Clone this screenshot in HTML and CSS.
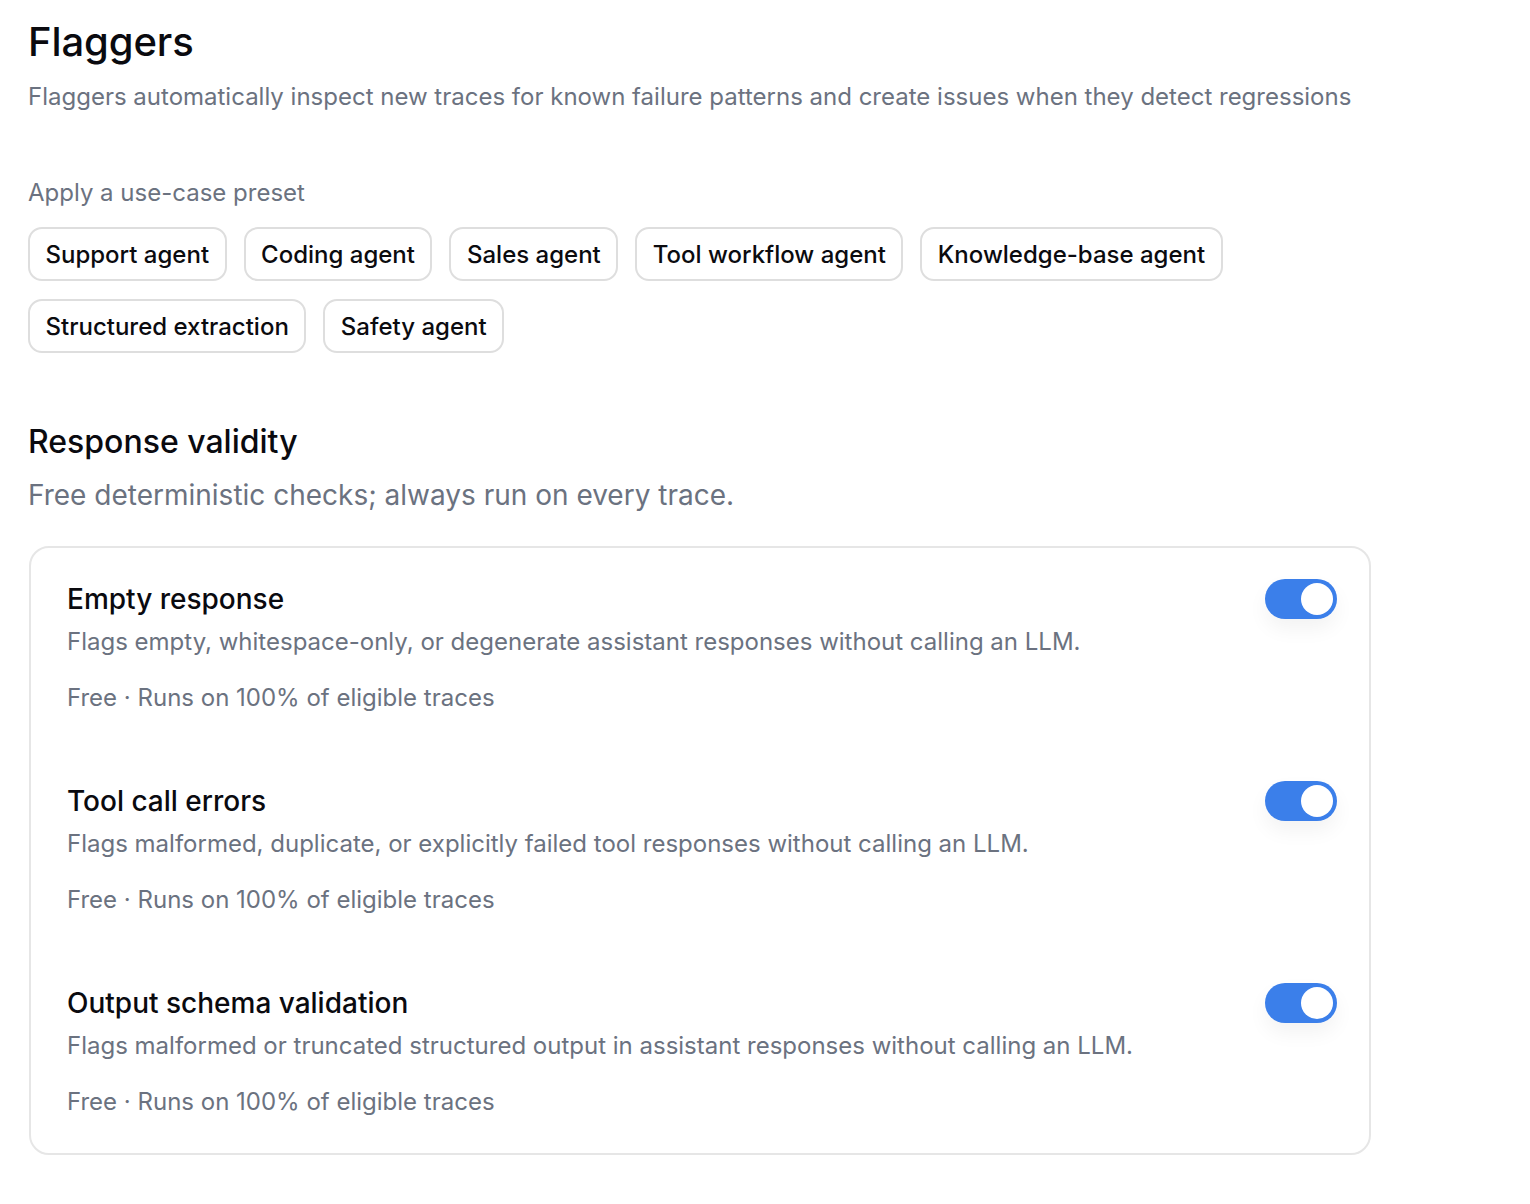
FILE: index.html
```html
<!DOCTYPE html>
<html>
<head>
<meta charset="utf-8">
<link rel="stylesheet" href="styles.css">
</head>
<body>
<main class="page">
  <header class="head">
    <h1 class="title">Flaggers</h1>
    <p class="subtitle">Flaggers automatically inspect new traces for known failure patterns and create issues when they detect regressions</p>
  </header>

  <section class="presets">
    <div class="presets-label">Apply a use-case preset</div>
    <div class="chips">
      <button class="chip">Support agent</button>
      <button class="chip">Coding agent</button>
      <button class="chip">Sales agent</button>
      <button class="chip">Tool workflow agent</button>
      <button class="chip">Knowledge-base agent</button>
      <button class="chip">Structured extraction</button>
      <button class="chip">Safety agent</button>
    </div>
  </section>

  <section class="group">
    <h2 class="group-title">Response validity</h2>
    <p class="group-desc">Free deterministic checks; always run on every trace.</p>
    <div class="card">
      <div class="item">
        <div class="item-text">
          <div class="item-title">Empty response</div>
          <div class="item-desc">Flags empty, whitespace-only, or degenerate assistant responses without calling an LLM.</div>
          <div class="item-meta">Free · Runs on 100% of eligible traces</div>
        </div>
        <span class="toggle on"><span class="knob"></span></span>
      </div>
      <div class="item">
        <div class="item-text">
          <div class="item-title">Tool call errors</div>
          <div class="item-desc">Flags malformed, duplicate, or explicitly failed tool responses without calling an LLM.</div>
          <div class="item-meta">Free · Runs on 100% of eligible traces</div>
        </div>
        <span class="toggle on"><span class="knob"></span></span>
      </div>
      <div class="item">
        <div class="item-text">
          <div class="item-title">Output schema validation</div>
          <div class="item-desc">Flags malformed or truncated structured output in assistant responses without calling an LLM.</div>
          <div class="item-meta">Free · Runs on 100% of eligible traces</div>
        </div>
        <span class="toggle on"><span class="knob"></span></span>
      </div>
    </div>
  </section>
</main>
</body>
</html>
```

FILE: styles.css
```css
* { box-sizing: border-box; }
html, body { margin: 0; padding: 0; background: #ffffff; }
body {
  font-family: Inter, "Noto Sans", "Liberation Sans", sans-serif;
  color: #0b0b0f;
}
.page {
  width: 1371px;
  padding: 18px 0 0 28px;
}
.title {
  margin: 0;
  font-size: 40px;
  font-weight: 500;
  line-height: 48px;
  letter-spacing: -0.1px;
  color: #0a0a0f;
}
.subtitle {
  margin: 15px 0 0;
  font-size: 24px;
  line-height: 32px;
  color: #6b7280;
  font-weight: 400;
}
.presets { margin-top: 64px; }
.presets-label {
  font-size: 24px;
  line-height: 32px;
  color: #6b7280;
}
.chips {
  margin-top: 18px;
  display: flex;
  flex-wrap: wrap;
  gap: 18px 17px;
  width: 1240px;
}
.chip {
  font-family: inherit;
  height: 54px;
  padding: 0 15.5px;
  font-size: 24px;
  font-weight: 500;
  color: #0b0b0f;
  background: #fff;
  border: 2px solid #dedede;
  border-radius: 14px;
}
.group { margin-top: 69px; }
.group-title {
  margin: 0;
  font-size: 32px;
  font-weight: 500;
  line-height: 40px;
  color: #0a0a0f;
}
.group-desc {
  margin: 15px 0 0;
  font-size: 28px;
  line-height: 36px;
  color: #6b7280;
}
.card {
  margin-top: 33px;
  margin-left: 1px;
  width: 1342px;
  border: 2px solid #e6e6e6;
  border-radius: 20px;
  padding: 30px 32px 29px 36px;
  display: flex;
  flex-direction: column;
  gap: 60px;
}
.item {
  display: flex;
  justify-content: space-between;
  align-items: flex-start;
}
.item-title {
  font-size: 28px;
  font-weight: 500;
  line-height: 42px;
  color: #0a0a0f;
}
.item-desc {
  font-size: 24px;
  line-height: 44px;
  color: #6b7280;
}
.item-meta {
  margin-top: 12px;
  font-size: 24px;
  line-height: 44px;
  color: #6b7280;
}
.toggle {
  margin-top: 1px;
  width: 72px;
  height: 40px;
  border-radius: 20px;
  background: #3b7fea;
  display: flex;
  align-items: center;
  justify-content: flex-end;
  padding: 0 4px;
  box-shadow: 0 10px 20px rgba(0,0,0,0.05);
  flex-shrink: 0;
}
.knob {
  width: 32px;
  height: 32px;
  border-radius: 50%;
  background: #fff;
}
```
